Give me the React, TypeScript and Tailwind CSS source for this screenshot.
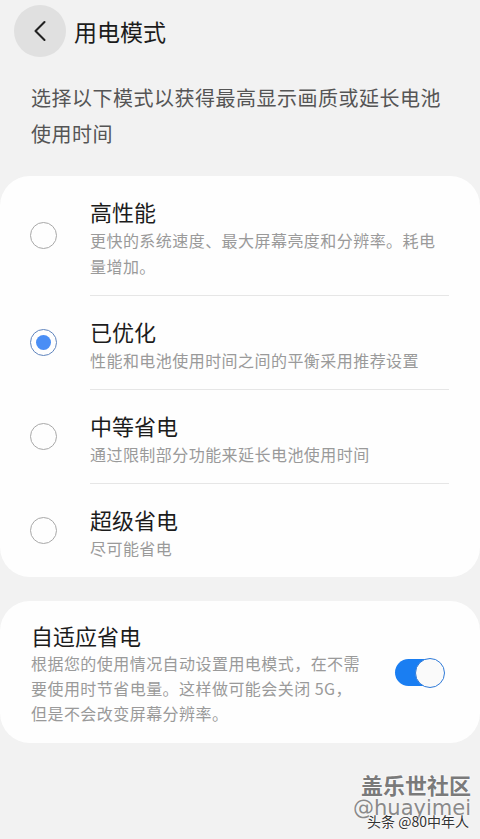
import { ChevronLeft } from 'lucide-react';

const font = { fontFamily: '"Noto Sans CJK SC", "Noto Sans", sans-serif' };

const modes = [
  { title: '高性能', desc: ['更快的系统速度、最大屏幕亮度和分辨率。耗电', '量增加。'] },
  { title: '已优化', desc: ['性能和电池使用时间之间的平衡采用推荐设置'] },
  { title: '中等省电', desc: ['通过限制部分功能来延长电池使用时间'] },
  { title: '超级省电', desc: ['尽可能省电'] },
];

function Radio({ on }: { on: boolean }) {
  if (on) {
    return (
      <div className="flex h-[27px] w-[27px] shrink-0 items-center justify-center rounded-full border-[1.5px] border-[#5f84bd]">
        <div className="h-[15px] w-[15px] rounded-full bg-[#4a8ef5]" />
      </div>
    );
  }
  return <div className="h-[27px] w-[27px] shrink-0 rounded-full border-[1.5px] border-[#a8a8a8]" />;
}

export default function App() {
  const selected = 1;
  return (
    <div className="relative h-[839px] w-[480px] overflow-hidden bg-[#f2f2f2]" style={font}>
      {/* Header */}
      <div className="flex items-center pl-[14px] pt-[5px]">
        <div className="flex h-[52px] w-[52px] items-center justify-center rounded-full bg-[#e0e0e0]">
          <ChevronLeft className="h-[36px] w-[36px] text-[#222]" strokeWidth={1.4} />
        </div>
        <span className="ml-[8px] text-[23px] leading-[30px] text-[#1c1c1c]">用电模式</span>
      </div>

      <p className="mt-[23px] px-[31px] text-[20px] leading-[36px] tracking-[0.5px] text-[#555]">
        选择以下模式以获得最高显示画质或延长电池<br />使用时间
      </p>

      {/* Mode list */}
      <div className="mt-[24px] rounded-[30px] bg-[#fefefe]">
        {modes.map((m, i) => (
          <div key={m.title} className="flex items-center pl-[30px]">
            <Radio on={i === selected} />
            <div className={`ml-[33px] mr-[31px] flex-1 pt-5 pb-4 ${i > 0 ? 'border-t border-[#e6e6e6]' : ''}`}>
              <div className="text-[22px] leading-[31px] text-[#1c1c1c]">{m.title}</div>
              {m.desc.map((d) => (
                <div key={d} className="text-[16px] leading-[26px] tracking-[0.45px] text-[#9a9a9a]">{d}</div>
              ))}
            </div>
          </div>
        ))}
      </div>

      {/* Adaptive power saving */}
      <div className="mt-[24px] flex items-center rounded-[30px] bg-[#fefefe] pl-[31px] pr-[35px] pt-[18px] pb-[17px]">
        <div className="flex-1">
          <div className="text-[22px] leading-[32px] text-[#1c1c1c]">自适应省电</div>
          <div className="text-[16px] leading-[25px] tracking-[0.45px] text-[#9a9a9a]">
            根据您的使用情况自动设置用电模式，在不需<br />要使用时节省电量。这样做可能会关闭 5G，<br />但是不会改变屏幕分辨率。
          </div>
        </div>
        <div className="relative flex h-[30px] w-[50px] items-center">
          <div className="h-[27px] w-[48px] rounded-full bg-[#1a7ef2]" />
          <div className="absolute right-0 top-0 h-[30px] w-[30px] rounded-full border-[1.5px] border-[#2f7ad8] bg-[#fafafa]" />
        </div>
      </div>

      {/* Watermark */}
      <div
        className="absolute right-[9px] top-[770px] text-[22px] font-bold leading-[28px] text-[#7a7a7a]"
        style={{ textShadow: '0 0 2px #fff, 0 0 2px #fff' }}
      >
        盖乐世社区
      </div>
      <div
        className="absolute right-[9px] top-[796px] text-[21px] leading-[24px] text-[#8a8a8a]"
        style={{ fontFamily: '"DejaVu Sans", sans-serif', textShadow: '0 0 2px #fff' }}
      >
        @huayimei
      </div>
      <div
        className="absolute right-[11px] top-[812px] text-[14px] leading-[18px] text-[#333]"
        style={{ textShadow: '0 0 2px #fff, 0 0 2px #fff' }}
      >
        头条 @80中年人
      </div>
    </div>
  );
}
